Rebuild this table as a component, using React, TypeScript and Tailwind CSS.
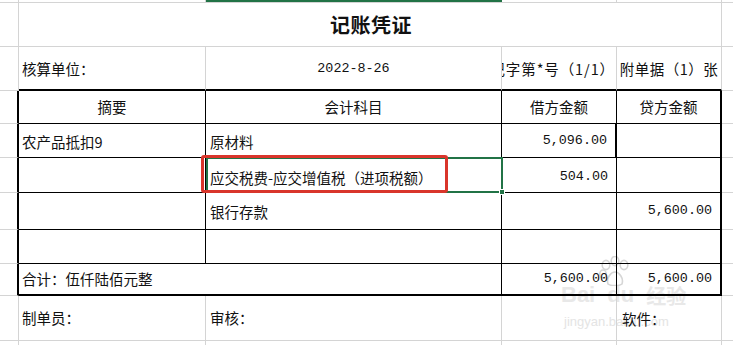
import React from "react";

const G = "border-[#d4d4d4]";
const cjk = "font-['Noto_Sans_CJK_SC','Noto_Sans_CJK_JP',sans-serif]";
const mono = "font-['Liberation_Mono',monospace]";

function Paw() {
  return (
    <svg width="34" height="30" viewBox="0 0 34 30" className="block">
      <g fill="none" stroke="#d6d6d6" strokeWidth="1.6">
        <ellipse cx="8" cy="9" rx="3.8" ry="4.6" />
        <ellipse cx="17" cy="5" rx="3.8" ry="4.6" />
        <ellipse cx="26" cy="9" rx="3.8" ry="4.6" />
        <ellipse cx="5" cy="18" rx="3.2" ry="4" />
        <path d="M10 28 C8 22 13 16 17 16 C21 16 26 22 24 28 C22 30 12 30 10 28 Z" />
      </g>
    </svg>
  );
}

export default function App() {
  const tableStubL = `w-[19px] shrink-0 border-b border-b-[#d4d4d4] border-r-2 border-r-black`;
  const stubR = `flex-1 border-b ${G}`;
  const txt = `${cjk} text-[14.5px] text-[#111] whitespace-nowrap`;
  const num = `${mono} text-[13.4px] text-[#111] whitespace-nowrap`;

  return (
    <div className="relative isolate w-[733px] h-[345px] overflow-hidden bg-white">
      {/* watermark (behind content) */}
      <div className="absolute -z-10 left-[561px] top-[262px] pointer-events-none select-none">
        <div className="flex items-end h-[44px]">
          <span className="font-['Liberation_Sans',sans-serif] text-[22px] font-bold leading-none text-[#e8e8e8]">Bai</span>
          <span className="relative ml-[12px] font-['Liberation_Sans',sans-serif] text-[22px] font-bold leading-none text-[#e8e8e8]">
            du
            <span className="absolute left-[-9px] bottom-full mb-[-2px]">
              <Paw />
            </span>
          </span>
          <span className={`${cjk} text-[20px] font-bold leading-none text-[#e8e8e8] pl-[12px]`}>经验</span>
        </div>
        <div className="font-['Liberation_Sans',sans-serif] text-[13px] text-[#e4e4e4] leading-none mt-[9px] pl-[3px]">jingyan.baidu.com</div>
      </div>

      {/* top strip */}
      <div className="flex h-[3px]">
        <div className={`w-[19px] shrink-0 border-b border-r ${G}`} />
        <div className={`w-[187px] shrink-0 border-b border-r ${G}`} />
        <div className="w-[296px] shrink-0 border-t-2 border-t-[#217346] border-b border-b-[#d4d4d4]" />
        <div className={`w-[115px] shrink-0 border-b border-r ${G}`} />
        <div className={`w-[105px] shrink-0 border-b border-r ${G}`} />
        <div className={stubR} />
      </div>

      {/* title row */}
      <div className="flex h-[44px]">
        <div className={`w-[19px] shrink-0 border-b border-r ${G}`} />
        <div className={`w-[703px] shrink-0 border-b border-r ${G} flex items-center justify-center`}>
          <span className={`${cjk} text-[20px] font-bold text-[#111] tracking-[0.5px] pl-[2px]`}>记账凭证</span>
        </div>
        <div className={stubR} />
      </div>

      {/* info row */}
      <div className="flex h-[44px]">
        <div className={`w-[19px] shrink-0 border-b border-r ${G}`} />
        <div className="w-[187px] shrink-0 border-b-2 border-b-black border-r border-r-[#d4d4d4] flex items-center pl-[3px] pt-[2px]">
          <span className={txt}>核算单位：</span>
        </div>
        <div className="w-[296px] shrink-0 border-b-2 border-b-black border-r border-r-[#d4d4d4] flex items-center justify-center pt-[2px]">
          <span className={num}>2022-8-26</span>
        </div>
        <div className="w-[115px] shrink-0 border-b-2 border-b-black border-r border-r-[#d4d4d4] flex items-center justify-end pr-[1px] overflow-hidden pt-[2px]">
          <span className={`${txt} shrink-0 tracking-[0.9px]`}>记字第*号（1/1）</span>
        </div>
        <div className="w-[105px] shrink-0 border-b-2 border-b-black border-r border-r-[#d4d4d4] flex items-center justify-center overflow-hidden pt-[2px]">
          <span className={`${txt} shrink-0 tracking-[0.5px]`}>附单据（1）张</span>
        </div>
        <div className={stubR} />
      </div>

      {/* header row */}
      <div className="flex h-[33px]">
        <div className={tableStubL} />
        <div className="w-[187px] shrink-0 border-b border-r border-black flex items-center justify-center">
          <span className={txt}>摘要</span>
        </div>
        <div className="w-[296px] shrink-0 border-b border-r border-black flex items-center justify-center">
          <span className={txt}>会计科目</span>
        </div>
        <div className="w-[115px] shrink-0 border-b border-r border-black flex items-center justify-center">
          <span className={txt}>借方金额</span>
        </div>
        <div className="w-[105px] shrink-0 border-b border-black border-r-2 flex items-center justify-center">
          <span className={txt}>贷方金额</span>
        </div>
        <div className={stubR} />
      </div>

      {/* row A */}
      <div className="flex h-[34px]">
        <div className={tableStubL} />
        <div className="w-[187px] shrink-0 border-b border-r border-black flex items-center pl-[3px] pt-[2px]">
          <span className={txt}>农产品抵扣9</span>
        </div>
        <div className="w-[296px] shrink-0 border-b border-r border-black flex items-center pl-[4px] pt-[2px]">
          <span className={txt}>原材料</span>
        </div>
        <div className="w-[115px] shrink-0 border-b border-black border-r-2 flex items-center justify-end pr-[8px] pt-[2px]">
          <span className={num}>5,096.00</span>
        </div>
        <div className="w-[105px] shrink-0 border-b border-black border-r-2" />
        <div className={stubR} />
      </div>

      {/* row B */}
      <div className="flex h-[35px]">
        <div className={tableStubL} />
        <div className="w-[187px] shrink-0 border-b border-r border-black" />
        <div className="relative w-[296px] shrink-0 border-b border-r border-black flex items-center pl-[4px] pt-[5px]">
          <span className={txt}>应交税费-应交增值税（进项税额）</span>
          <div className="absolute top-[-1px] left-0 w-[297px] h-[36px] border-2 border-[#217346]" />
          <div className="absolute right-[-4px] bottom-[-3px] w-[6px] h-[6px] bg-[#217346] border border-white" />
          <div className="absolute top-[-3px] left-[-5px] w-[247px] h-[38px] border-[3px] border-[#d9352b] rounded-[3px]" />
        </div>
        <div className="w-[115px] shrink-0 border-b border-r border-black flex items-center justify-end pr-[8px] pt-[5px]">
          <span className={num}>504.00</span>
        </div>
        <div className="w-[105px] shrink-0 border-b border-black border-r-2" />
        <div className={stubR} />
      </div>

      {/* row C */}
      <div className="flex h-[37px]">
        <div className={tableStubL} />
        <div className="w-[187px] shrink-0 border-b border-r border-black" />
        <div className="w-[296px] shrink-0 border-b border-r border-black flex items-center pl-[4px] pt-[1px]">
          <span className={txt}>银行存款</span>
        </div>
        <div className="w-[115px] shrink-0 border-b border-r border-black" />
        <div className="w-[105px] shrink-0 border-b border-black border-r-2 flex items-center justify-end pr-[8px] pt-[1px]">
          <span className={num}>5,600.00</span>
        </div>
        <div className={stubR} />
      </div>

      {/* row D */}
      <div className="flex h-[34px]">
        <div className={tableStubL} />
        <div className="w-[187px] shrink-0 border-b border-r border-black" />
        <div className="w-[296px] shrink-0 border-b border-r border-black" />
        <div className="w-[115px] shrink-0 border-b border-r border-black" />
        <div className="w-[105px] shrink-0 border-b border-black border-r-2" />
        <div className={stubR} />
      </div>

      {/* total row */}
      <div className="flex h-[32px]">
        <div className={tableStubL} />
        <div className="w-[483px] shrink-0 border-b-2 border-r border-black flex items-center pl-[3px]">
          <span className={txt}>合计：伍仟陆佰元整</span>
        </div>
        <div className="w-[115px] shrink-0 border-b-2 border-r border-black flex items-center justify-end pr-[8px]">
          <span className={num}>5,600.00</span>
        </div>
        <div className="w-[105px] shrink-0 border-b-2 border-black border-r-2 flex items-center justify-end pr-[8px]">
          <span className={num}>5,600.00</span>
        </div>
        <div className={stubR} />
      </div>

      {/* footer row */}
      <div className="flex h-[45px]">
        <div className={`w-[19px] shrink-0 border-b border-r ${G}`} />
        <div className={`w-[187px] shrink-0 border-b border-r ${G} flex items-center pl-[3px]`}>
          <span className={txt}>制单员：</span>
        </div>
        <div className={`w-[296px] shrink-0 border-b border-r ${G} flex items-center pl-[4px]`}>
          <span className={txt}>审核：</span>
        </div>
        <div className={`w-[115px] shrink-0 border-b border-r ${G}`} />
        <div className={`w-[105px] shrink-0 border-b border-r ${G} flex items-center pl-[5px] pt-[2px]`}>
          <span className={txt}>软件：</span>
        </div>
        <div className={stubR} />
      </div>

      {/* last partial row */}
      <div className="flex h-[10px]">
        <div className={`w-[19px] shrink-0 border-r ${G}`} />
        <div className={`w-[187px] shrink-0 border-r ${G}`} />
        <div className={`w-[296px] shrink-0 border-r ${G}`} />
        <div className={`w-[115px] shrink-0 border-r ${G}`} />
        <div className={`w-[105px] shrink-0 border-r ${G}`} />
        <div className="flex-1" />
      </div>
    </div>
  );
}
